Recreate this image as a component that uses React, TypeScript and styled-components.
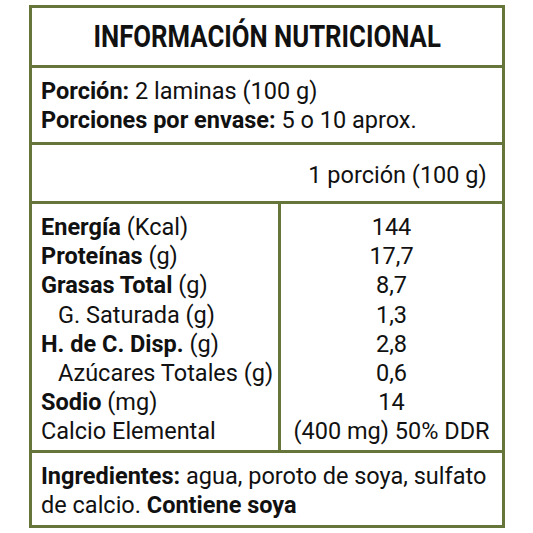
import styled, { createGlobalStyle } from "styled-components";

const GlobalStyle = createGlobalStyle`
    html, body {
        margin: 0;
        padding: 0;
        background: #ffffff;
    }
    body {
        font-family: Roboto, "Liberation Sans", sans-serif;
        color: #111111;
    }
`;

const LINE = "#66763a";

const Page = styled.div`
    width: 533px;
    height: 533px;
    padding: 5px 0 0 29px;
    box-sizing: border-box;
`;

const Label = styled.div`
    width: 476px;
    border: 3px solid ${LINE};
    box-sizing: border-box;
    background: #ffffff;
`;

const Section = styled.div<{ $height: number; $pad?: string; $last?: boolean }>`
    height: ${props => props.$height}px;
    padding: ${props => props.$pad ?? "0 9px"};
    box-sizing: border-box;
    border-bottom: ${props => (props.$last ? "none" : `3px solid ${LINE}`)};
`;

const Title = styled.h1`
    margin: 0;
    height: 100%;
    display: flex;
    align-items: center;
    justify-content: center;
    font-size: 31px;
    font-weight: 700;
    color: #111111;
    white-space: nowrap;

    span {
        display: inline-block;
        transform: scaleX(0.83);
    }
`;

const Line = styled.div<{ $indent?: boolean }>`
    font-size: 23.5px;
    line-height: 29.2px;
    white-space: nowrap;
    padding-left: ${props => (props.$indent ? "17px" : "0")};
`;

const Strong = styled.b`
    font-weight: 700;
`;

const HeaderRow = styled.div`
    height: 59px;
    display: grid;
    grid-template-columns: 246px 1fr;
    align-items: center;
    padding-top: 3px;
    border-bottom: 3px solid ${LINE};
    box-sizing: border-box;
    font-size: 23.5px;
`;

const HeaderValue = styled.div`
    grid-column: 2;
    text-align: center;
    padding-left: 15px;
    white-space: nowrap;
`;

const Table = styled.div`
    height: 249px;
    display: grid;
    grid-template-columns: 246px 3px 1fr;
    border-bottom: 3px solid ${LINE};
    box-sizing: border-box;
`;

const Column = styled.div<{ $center?: boolean }>`
    padding: 9px ${props => (props.$center ? "0" : "9px")} 0;
    text-align: ${props => (props.$center ? "center" : "left")};
`;

const Divider = styled.div`
    background: ${LINE};
`;

const rows: { name: string; unit: string; value: string; bold: boolean; indent?: boolean }[] = [
    { name: "Energía", unit: " (Kcal)", value: "144", bold: true },
    { name: "Proteínas", unit: " (g)", value: "17,7", bold: true },
    { name: "Grasas Total", unit: " (g)", value: "8,7", bold: true },
    { name: "G. Saturada", unit: " (g)", value: "1,3", bold: false, indent: true },
    { name: "H. de C. Disp.", unit: " (g)", value: "2,8", bold: true },
    { name: "Azúcares Totales", unit: " (g)", value: "0,6", bold: false, indent: true },
    { name: "Sodio", unit: " (mg)", value: "14", bold: true },
    { name: "Calcio Elemental", unit: "", value: "(400 mg) 50% DDR", bold: false },
];

export default function App() {
    return (
        <>
            <GlobalStyle />
            <Page>
                <Label>
                    <Section $height={60} $pad="0">
                        <Title><span>INFORMACIÓN NUTRICIONAL</span></Title>
                    </Section>
                    <Section $height={77} $pad="9px 9px 0">
                        <Line><Strong>Porción:</Strong> 2 laminas (100 g)</Line>
                        <Line><Strong>Porciones por envase:</Strong> 5 o 10 aprox.</Line>
                    </Section>
                    <HeaderRow>
                        <HeaderValue>1 porción (100 g)</HeaderValue>
                    </HeaderRow>
                    <Table>
                        <Column>
                            {rows.map(row => (
                                <Line key={row.name} $indent={row.indent}>
                                    {row.bold ? <Strong>{row.name}</Strong> : row.name}
                                    {row.unit}
                                </Line>
                            ))}
                        </Column>
                        <Divider />
                        <Column $center>
                            {rows.map(row => (
                                <Line key={row.name}>{row.value}</Line>
                            ))}
                        </Column>
                    </Table>
                    <Section $height={72} $pad="9px 9px 0" $last>
                        <Line><Strong>Ingredientes:</Strong> agua, poroto de soya, sulfato</Line>
                        <Line>de calcio. <Strong>Contiene soya</Strong></Line>
                    </Section>
                </Label>
            </Page>
        </>
    );
}
